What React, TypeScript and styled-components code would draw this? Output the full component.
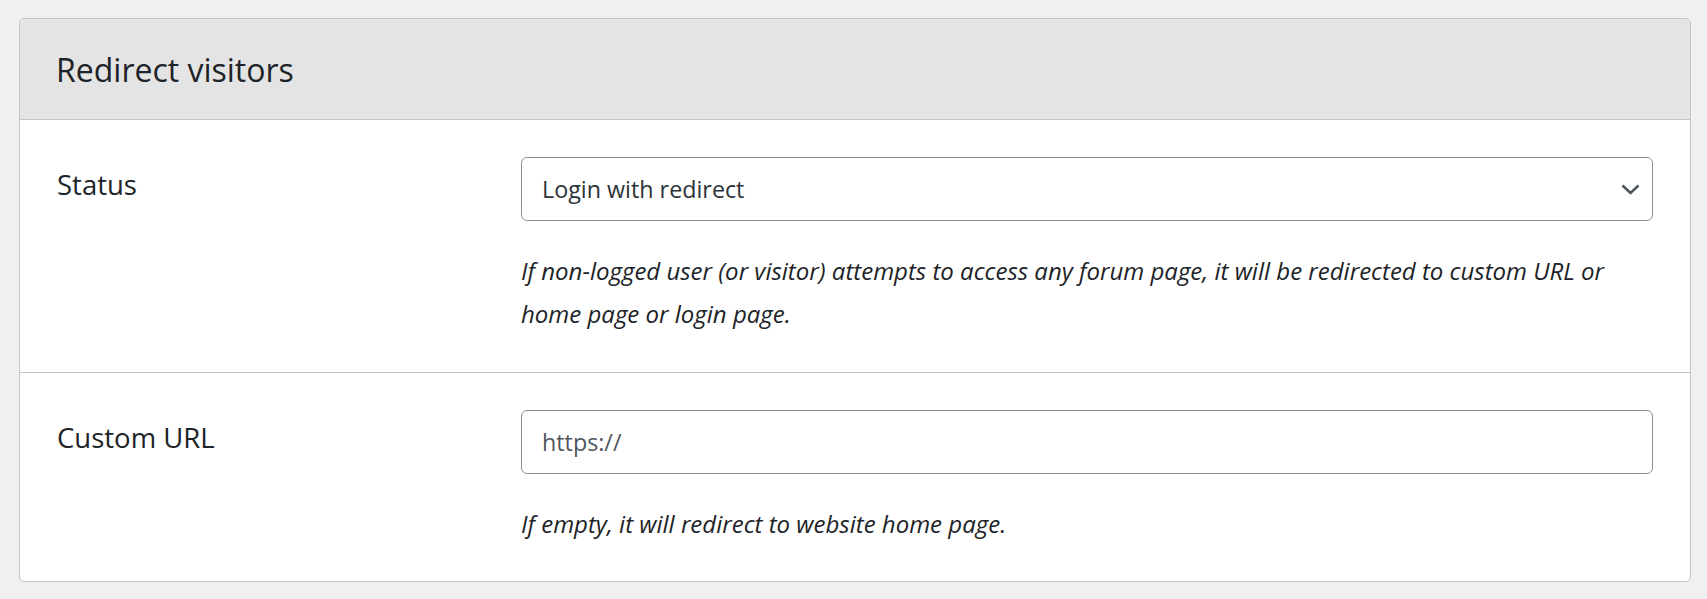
import styled, { createGlobalStyle } from "styled-components";

const GlobalStyle = createGlobalStyle`
  body {
    margin: 0;
    background: #f0f0f1;
    font-family: "Open Sans", "Noto Sans", sans-serif;
    color: #1d2327;
  }
`;

const Page = styled.div`
  padding: 18px 16px 0 19px;
`;

const Card = styled.section`
  background: #fff;
  border: 1px solid #c3c4c7;
  border-radius: 5px;
  overflow: hidden;
`;

const Header = styled.header`
  height: 101px;
  box-sizing: border-box;
  padding: 2px 36px 0;
  background: #e4e4e4;
  border-bottom: 1px solid #c3c4c7;
`;

const Title = styled.h2`
  margin: 0;
  font-size: 32px;
  font-weight: 400;
  line-height: 98px;
  color: #1d2327;
`;

const Row = styled.div<{ $last?: boolean }>`
  display: grid;
  grid-template-columns: 464px 1fr;
  padding: 37px 37px ${(p) => (p.$last ? "36px" : "37px")};
  border-bottom: ${(p) => (p.$last ? "none" : "1px solid #c3c4c7")};
`;

const Label = styled.label`
  font-size: 27.5px;
  line-height: 56px;
  color: #1d2327;
`;

const Field = styled.div`
  display: flex;
  flex-direction: column;
`;

const SelectWrap = styled.div`
  position: relative;
`;

const Select = styled.select`
  appearance: none;
  width: 100%;
  height: 64px;
  box-sizing: border-box;
  padding: 0 48px 0 20px;
  border: 1px solid #8c8f94;
  border-radius: 6px;
  background: #fff;
  font-family: inherit;
  font-size: 23.3px;
  color: #2c3338;
  outline: none;
`;

const Chevron = styled.svg`
  position: absolute;
  right: 13px;
  top: 50%;
  width: 19px;
  height: 11px;
  margin-top: -5px;
  pointer-events: none;
`;

const Input = styled.input`
  width: 100%;
  height: 64px;
  box-sizing: border-box;
  padding: 0 20px;
  border: 1px solid #8c8f94;
  border-radius: 6px;
  font-family: inherit;
  font-size: 23.3px;
  color: #2c3338;
  outline: none;

  &::placeholder {
    color: #50575e;
  }
`;

const Help = styled.p`
  margin: 28px 0 0;
  font-size: 24px;
  font-style: italic;
  line-height: 43px;
  color: #1d2327;
`;

export default function App() {
  return (
    <Page>
      <GlobalStyle />
      <Card>
        <Header>
          <Title>Redirect visitors</Title>
        </Header>
        <Row>
          <Label htmlFor="redirect-status">Status</Label>
          <Field>
            <SelectWrap>
              <Select id="redirect-status" defaultValue="login">
                <option value="off">Disabled</option>
                <option value="login">Login with redirect</option>
                <option value="home">Redirect to home page</option>
              </Select>
              <Chevron viewBox="0 0 19 11">
                <polyline
                  points="1.5,1.5 9.5,9 17.5,1.5"
                  fill="none"
                  stroke="#50575e"
                  strokeWidth="2.6"
                />
              </Chevron>
            </SelectWrap>
            <Help>
              If non-logged user (or visitor) attempts to access any forum page, it will be
              redirected to custom URL or home page or login page.
            </Help>
          </Field>
        </Row>
        <Row $last>
          <Label htmlFor="redirect-url">Custom URL</Label>
          <Field>
            <Input id="redirect-url" type="text" placeholder="https://" />
            <Help>If empty, it will redirect to website home page.</Help>
          </Field>
        </Row>
      </Card>
    </Page>
  );
}
